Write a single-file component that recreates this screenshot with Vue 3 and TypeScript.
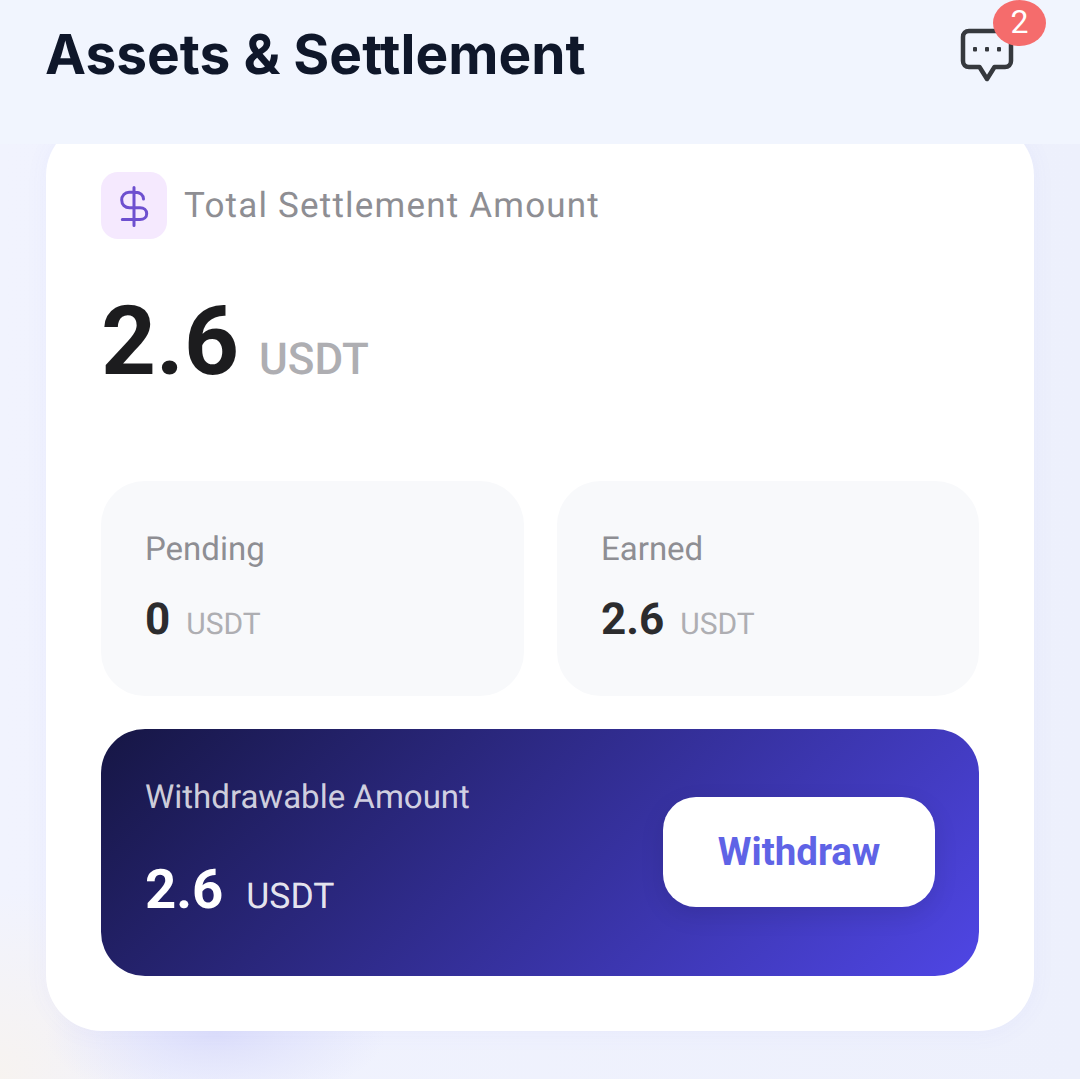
<script setup lang="ts">
const stats = [
  { label: 'Pending', value: '0' },
  { label: 'Earned', value: '2.6' }
]
</script>

<template>
  <div class="page">
    <header class="topbar">
      <h1 class="title">Assets &amp; Settlement</h1>
      <div class="msg">
        <svg class="msg-icon" width="58" height="58" viewBox="0 0 58 58" fill="none">
          <path d="M11 4H47C50.500 4 53 6.500 53 10V34C53 37.500 50.500 40 47 40H36.500L29 52L21.500 40H11C7.500 40 5 37.500 5 34V10C5 6.500 7.500 4 11 4Z" stroke="#36393e" stroke-width="4.500" stroke-linejoin="round" />
          <rect x="15" y="20" width="4" height="4.500" rx="1" fill="#36393e" />
          <rect x="27" y="20" width="4" height="4.500" rx="1" fill="#36393e" />
          <rect x="39" y="20" width="4" height="4.500" rx="1" fill="#36393e" />
        </svg>
        <span class="badge">2</span>
      </div>
    </header>

    <main class="card">
      <div class="total-head">
        <div class="dollar">
          <svg width="34" height="42" viewBox="0 0 34 42" fill="none">
            <path d="M17 2.500V40.500M26.500 14C26.500 10 23 7.200 18.500 7.200H12C8 7.200 4.700 10.500 4.700 15C4.700 19.500 8 22.800 12.500 22.800H23C27 22.800 29.700 25 29.700 28.700C29.700 32 27 34.500 23 34.500H5.300" stroke="#6d4fcf" stroke-width="3" stroke-linecap="round" />
          </svg>
        </div>
        <span class="total-label">Total Settlement Amount</span>
      </div>

      <div class="total-value">
        <span class="big">2.6</span>
        <span class="big-unit">USDT</span>
      </div>

      <div class="stats">
        <div v-for="s in stats" :key="s.label" class="stat">
          <div class="stat-label">{{ s.label }}</div>
          <div class="stat-value">
            <span class="num">{{ s.value }}</span>
            <span class="unit">USDT</span>
          </div>
        </div>
      </div>

      <div class="withdraw">
        <div>
          <div class="w-label">Withdrawable Amount</div>
          <div class="w-value">
            <span class="w-num">2.6</span>
            <span class="w-unit">USDT</span>
          </div>
        </div>
        <button class="w-btn">Withdraw</button>
      </div>
    </main>
  </div>
</template>

<style>
html, body {
  margin: 0;
  padding: 0;
}
</style>

<style scoped>
.page {
  height: 1079px;
  overflow: hidden;
  font-family: Roboto, sans-serif;
  text-rendering: geometricPrecision;
  background:
    radial-gradient(ellipse 170px 70px at 215px 1035px, #dddffb 0%, rgba(221, 223, 251, 0) 100%),
    radial-gradient(ellipse 170px 190px at 0 1079px, #f7f3f0 0%, rgba(247, 243, 240, 0) 100%),
    linear-gradient(90deg, #f1f3fe 0%, #edf0fc 100%);
}
.topbar {
  position: relative;
  z-index: 2;
  height: 144px;
  box-sizing: border-box;
  padding: 0 45px;
  background: #f1f5fe;
  display: flex;
  justify-content: space-between;
  align-items: flex-start;
}
.title {
  margin: 22px 0 0;
  font-family: Inter, sans-serif;
  font-size: 55px;
  line-height: 66px;
  font-weight: 700;
  color: #0f172a;
}
.msg {
  position: relative;
  width: 58px;
  height: 58px;
  margin: 27px 19px 0 0;
}
.msg-icon {
  display: block;
}
.badge {
  position: absolute;
  left: 35px;
  top: -27px;
  width: 53px;
  height: 46px;
  border-radius: 50%;
  background: #f56c6c;
  color: #fff;
  font-size: 32px;
  line-height: 44px;
  text-align: center;
}
.card {
  margin: -24px 46px 0 46px;
  padding: 52px 55px 55px 55px;
  background: #fff;
  border-radius: 56px;
  box-shadow: 0 2px 24px rgba(99, 102, 241, 0.05);
}
.total-head {
  display: flex;
  align-items: center;
  gap: 17px;
}
.dollar {
  width: 66px;
  height: 67px;
  border-radius: 17px;
  background: #f5e9fe;
  display: flex;
  align-items: center;
  justify-content: center;
}
.total-label {
  font-size: 35px;
  line-height: 40px;
  letter-spacing: 1.200px;
  color: #8e8e93;
}
.total-value {
  margin-top: 44px;
  height: 198px;
  display: flex;
  align-items: baseline;
  gap: 20px;
}
.big {
  font-size: 96px;
  line-height: 118px;
  font-weight: 700;
  color: #1c1c1e;
}
.big-unit {
  font-size: 44px;
  font-weight: 500;
  color: #aeaeb2;
}
.stats {
  display: grid;
  grid-template-columns: 423px 422px;
  gap: 33px;
}
.stat {
  height: 215px;
  box-sizing: border-box;
  padding: 50px 44px 0;
  border-radius: 44px;
  background: #f8f9fb;
}
.stat-label {
  font-size: 33px;
  line-height: 38px;
  color: #8e8e93;
}
.stat-value {
  margin-top: 24px;
  display: flex;
  align-items: baseline;
  gap: 16px;
}
.num {
  font-size: 44px;
  line-height: 52px;
  font-weight: 700;
  color: #2c2c2e;
}
.unit {
  font-size: 30px;
  color: #aeaeb2;
}
.withdraw {
  margin-top: 33px;
  height: 247px;
  box-sizing: border-box;
  padding: 0 44px 0 44px;
  border-radius: 44px;
  background: linear-gradient(135deg, #161644 0%, #4f46e5 100%);
  display: flex;
  justify-content: space-between;
  align-items: center;
}
.w-label {
  font-size: 33px;
  line-height: 40px;
  color: rgba(255, 255, 255, 0.8);
  margin-top: -5px;
}
.w-value {
  margin-top: 39px;
  display: flex;
  align-items: baseline;
  gap: 23px;
}
.w-num {
  font-size: 54.500px;
  line-height: 66px;
  font-weight: 700;
  color: #fff;
}
.w-unit {
  font-size: 35.500px;
  color: rgba(255, 255, 255, 0.9);
}
.w-btn {
  width: 272px;
  height: 110px;
  margin-top: -2px;
  border: 0;
  border-radius: 33px;
  background: #fff;
  color: #5f63e6;
  font-family: Roboto, sans-serif;
  font-size: 38.500px;
  font-weight: 700;
  box-shadow: 0 8px 24px rgba(0, 0, 0, 0.1);
}
</style>
